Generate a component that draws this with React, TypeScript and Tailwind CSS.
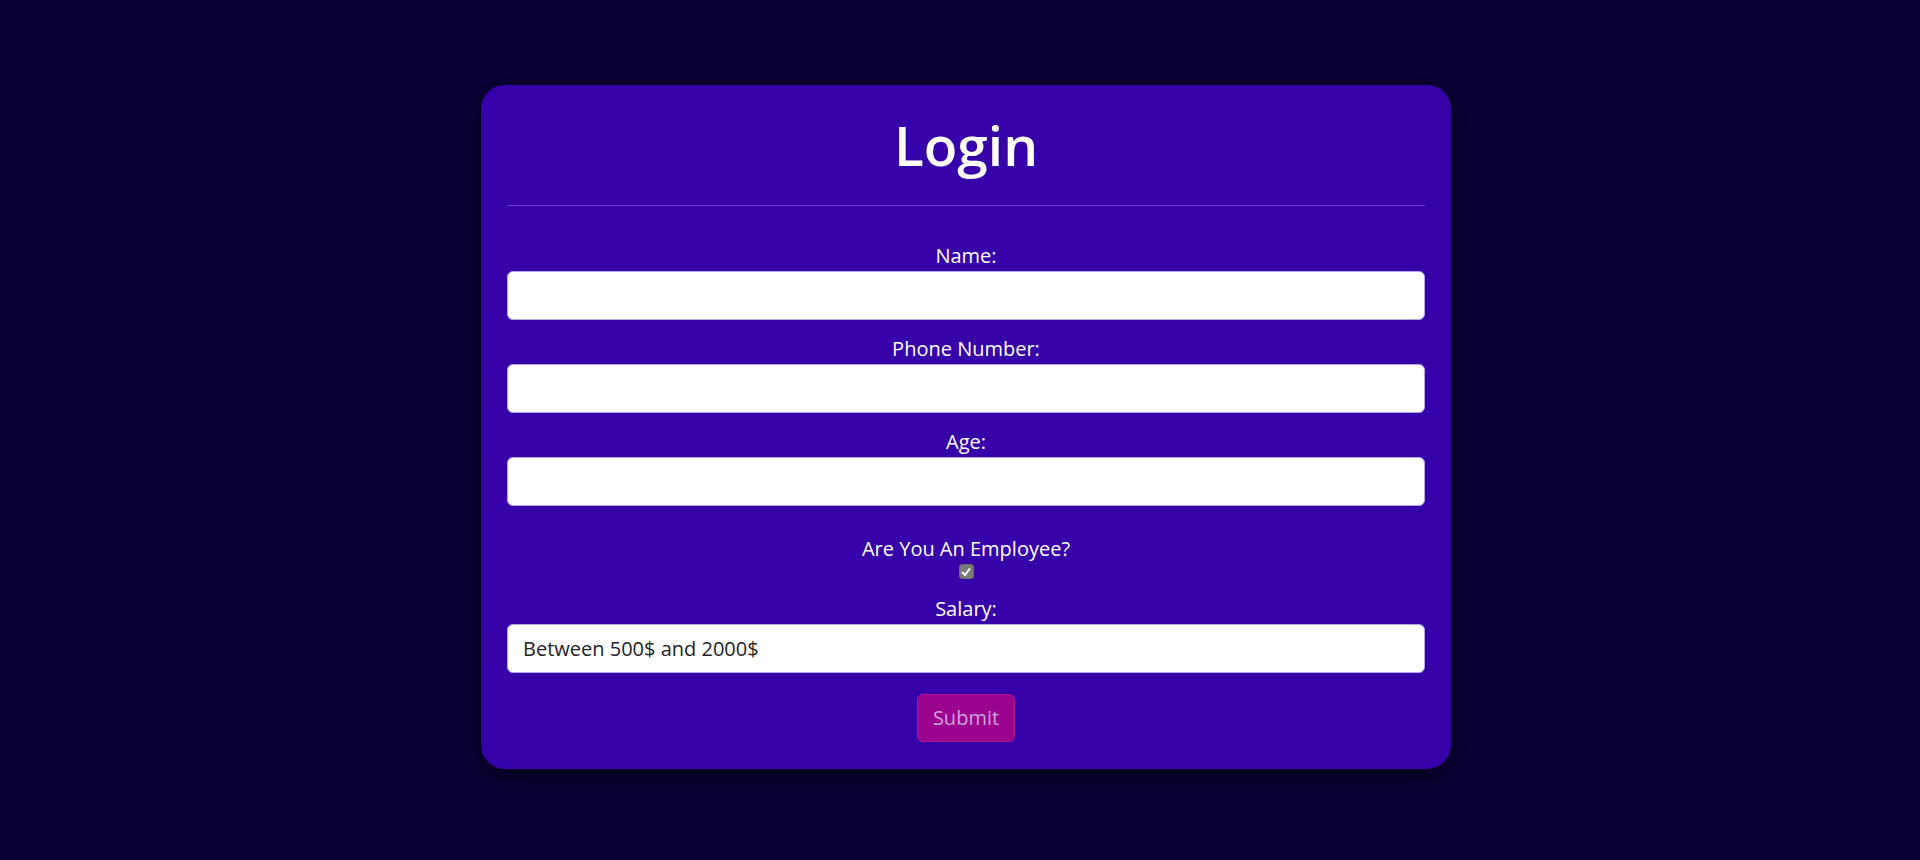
import React from 'react';

const fields = [
  { label: 'Name:', value: '' },
  { label: 'Phone Number:', value: '' },
  { label: 'Age:', value: '' },
];

const inputClass =
  'block w-full h-[49px] rounded-[6px] border border-[#b7a6e6] bg-white px-[15px] text-[20px] text-[#212529] outline-none';

const App: React.FC = () => {
  return (
    <div className="flex min-h-[860px] w-full justify-center bg-[#0a0035] pt-[85px] pl-[12px] font-['Open_Sans',sans-serif]">
      <div className="h-fit w-[970px] rounded-[24px] bg-[#3601a9] px-[26px] pt-[26px] pb-[27px] shadow-[0_8px_24px_rgba(0,0,0,0.5)]">
        <h1 className="text-center text-[55px] font-semibold leading-[67px] text-white">Login</h1>
        <div className="mt-[27px] h-px bg-[#5e3ec4]"></div>

        <form className="mt-[35px] flex flex-col" onSubmit={(e) => e.preventDefault()}>
          {fields.map((f, i) => (
            <div key={f.label} className={i === 0 ? '' : 'mt-[14px]'}>
              <label className="block text-center text-[20px] leading-[30px] text-white">{f.label}</label>
              <input type="text" defaultValue={f.value} className={inputClass} />
            </div>
          ))}

          {/* employee checkbox */}
          <div className="mt-[28px] flex flex-col items-center">
            <label className="block text-center text-[20px] leading-[30px] text-white">Are You An Employee?</label>
            <span className="flex h-[15px] w-[15px] items-center justify-center rounded-[3px] border border-[#6b6b6b] bg-[#7a7a7a]">
              <svg viewBox="0 0 12 12" className="h-[12px] w-[12px]" fill="none" stroke="white" strokeWidth="2" strokeLinecap="round" strokeLinejoin="round">
                <path d="M2.5 6.5 L5 9 L9.5 3" />
              </svg>
            </span>
          </div>

          <div className="mt-[15px]">
            <label className="block text-center text-[20px] leading-[30px] text-white">Salary:</label>
            <input type="text" defaultValue="Between 500$ and 2000$" className={inputClass} />
          </div>

          <div className="mt-[21px] flex justify-center">
            <button
              type="submit"
              className="h-[48px] w-[98px] rounded-[6px] border border-[#b3138f] bg-[#9b038f] text-[20px] text-[#cfa2dc]"
            >
              Submit
            </button>
          </div>
        </form>
      </div>
    </div>
  );
};

export default App;
